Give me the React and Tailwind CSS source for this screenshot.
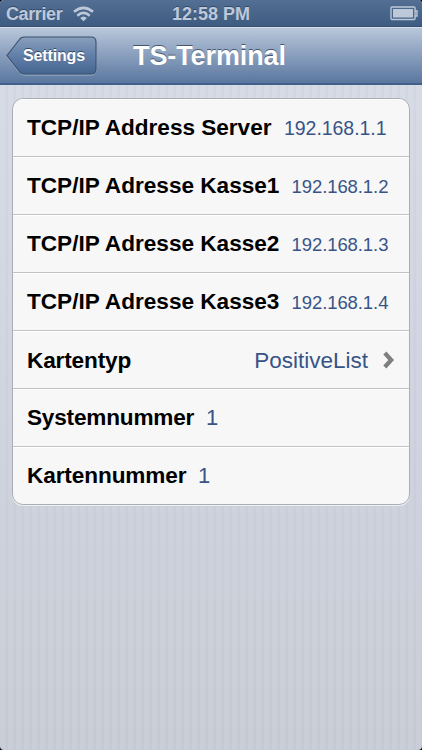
const rows = [
  { label: 'TCP/IP Address Server', value: '192.168.1.1', width: 'w-[245px]', tracking: 'tracking-[-0.02px]', size: 'text-[19.5px] tracking-[-0.05px] pt-[2px]' },
  { label: 'TCP/IP Adresse Kasse1', value: '192.168.1.2', width: 'w-[252.5px]', tracking: 'tracking-[0px]', size: 'text-[18.5px] tracking-[-0.08px] pt-[2px]' },
  { label: 'TCP/IP Adresse Kasse2', value: '192.168.1.3', width: 'w-[252.5px]', tracking: 'tracking-[0px]', size: 'text-[18.5px] tracking-[-0.08px] pt-[2px]' },
  { label: 'TCP/IP Adresse Kasse3', value: '192.168.1.4', width: 'w-[252.5px]', tracking: 'tracking-[0px]', size: 'text-[18.5px] tracking-[-0.08px] pt-[2px]' },
  { label: 'Kartentyp', value: 'PositiveList', tracking: 'tracking-[-0.15px]', link: true },
  { label: 'Systemnummer', value: '1', width: 'w-[167px]', tracking: 'tracking-[-0.2px]', size: 'text-[22px]' },
  { label: 'Kartennummer', value: '1', width: 'w-[159px]', tracking: 'tracking-[-0.1px]', size: 'text-[22px]' },
];

function StatusBar() {
  return (
    <div className="grid h-[27px] shrink-0 grid-cols-3 items-center border-b border-[#365174] bg-gradient-to-b from-[#536f93] to-[#3e5b81] pl-[5px] pr-[4px] text-[18px] font-bold leading-[26px] text-[#bdc9d9] [text-shadow:0_-1px_0_#35496a]">
      <div className="flex items-center gap-[11px]">
        <span className="pl-px pt-px tracking-[-0.4px]">Carrier</span>
        <svg width="21" height="16" viewBox="0 0 21 16" fill="none" stroke="#bdc9d9" strokeWidth="2.6">
          <path d="M1 5.8Q10.5-2.2 20 5.8M4.3 9.7Q10.5 4.1 16.7 9.7" />
          <path d="M7.1 11.9Q10.5 8.9 13.9 11.9L10.5 15.2Z" fill="#bdc9d9" stroke="none" />
        </svg>
      </div>
      <span className="whitespace-nowrap pr-px text-center">12:58 PM</span>
      <svg className="justify-self-end" width="28" height="15" viewBox="0 0 28 15" fill="none">
        <rect x="1" y="1" width="24" height="12.5" rx="1" stroke="#bdc9d9" strokeWidth="1.4" />
        <rect x="3" y="3" width="20" height="8.5" fill="#bdc9d9" />
        <path d="M25 5h2v5h-2" stroke="#bdc9d9" strokeWidth="1.4" />
      </svg>
    </div>
  );
}

function NavBar() {
  return (
    <div className="flex h-[58px] shrink-0 items-center border-b-2 border-t border-b-[#43608a] border-t-[#d4deea] bg-gradient-to-b from-[#b9c7da] to-[#5a779f] pl-[6px]">
      <div className="relative h-[40px] w-[92px]">
        <svg className="absolute inset-0" width="92" height="40" viewBox="0 0 92 40">
          <defs>
            <linearGradient id="back" x1="0" y1="0" x2="0" y2="1">
              <stop offset="0" stopColor="#899fbd" />
              <stop offset=".5" stopColor="#627fa9" />
              <stop offset="1" stopColor="#456590" />
            </linearGradient>
          </defs>
          <path d="M18 2H85Q90 2 90 7V34Q90 39 85 39H18Q15 39 13 36L1 20.5L13 5Q15 2 18 2Z" fill="none" stroke="#a0b2cb" />
          <path d="M18 1H85Q90 1 90 6V33Q90 38 85 38H18Q15 38 13 35L1 19.5L13 4Q15 1 18 1Z" fill="url(#back)" stroke="#3b506f" strokeWidth="1.1" />
        </svg>
        <span className="relative block pl-[17px] text-[16px] font-bold leading-[39px] tracking-[-0.15px] text-white [text-shadow:0_-1px_0_#364a68]">Settings</span>
      </div>
      <h1 className="ml-[35px] whitespace-nowrap text-[27px] font-bold leading-[54px] tracking-[-0.1px] text-white [text-shadow:0_-1px_0_#46566f]">TS-Terminal</h1>
    </div>
  );
}

function Row({ row }) {
  return (
    <div className="flex h-[58px] items-center whitespace-nowrap border-b border-[#c3c3c6] pl-[14px] shadow-[inset_0_1px_0_#fff] last:border-b-0 last:pb-px">
      <span className={`${row.link ? 'flex-1 pt-[2px]' : row.width} ${row.tracking} shrink-0 text-[22.6px] font-bold leading-[55px] text-black`}>{row.label}</span>
      {row.link ? (
        <>
          <span className="pt-[2px] text-[22.5px] text-[#385487]">{row.value}</span>
          <svg className="ml-[15px] mr-[14px] mt-[1px]" width="12" height="18" viewBox="0 0 12 18" fill="none" stroke="#7f7f7f" strokeWidth="4.2">
            <path d="M1.8 2L8.2 9L1.8 16" />
          </svg>
        </>
      ) : (
        <span className={`ml-3 ${row.size} text-[#385487]`}>{row.value}</span>
      )}
    </div>
  );
}

export default function App() {
  return (
    <div className="h-[750px] w-[422px] overflow-hidden bg-black font-['Liberation_Sans',Arial,sans-serif]">
      <div className="flex h-full flex-col overflow-hidden rounded-[4px] bg-[repeating-linear-gradient(90deg,#ffffff08_0px,#ffffff08_5px,#8792a80c_6px,#8792a80c_8px),linear-gradient(#d7dce6,#c7ccd6)]">
        <StatusBar />
        <NavBar />
        <div className="mx-3 mt-[13px] h-[407px] overflow-hidden rounded-[11px] border border-[#a9adb6] bg-[#f7f7f7] shadow-[0_1px_0_#eef0f4]">
          {rows.map((row) => <Row key={row.label} row={row} />)}
        </div>
      </div>
    </div>
  );
}
